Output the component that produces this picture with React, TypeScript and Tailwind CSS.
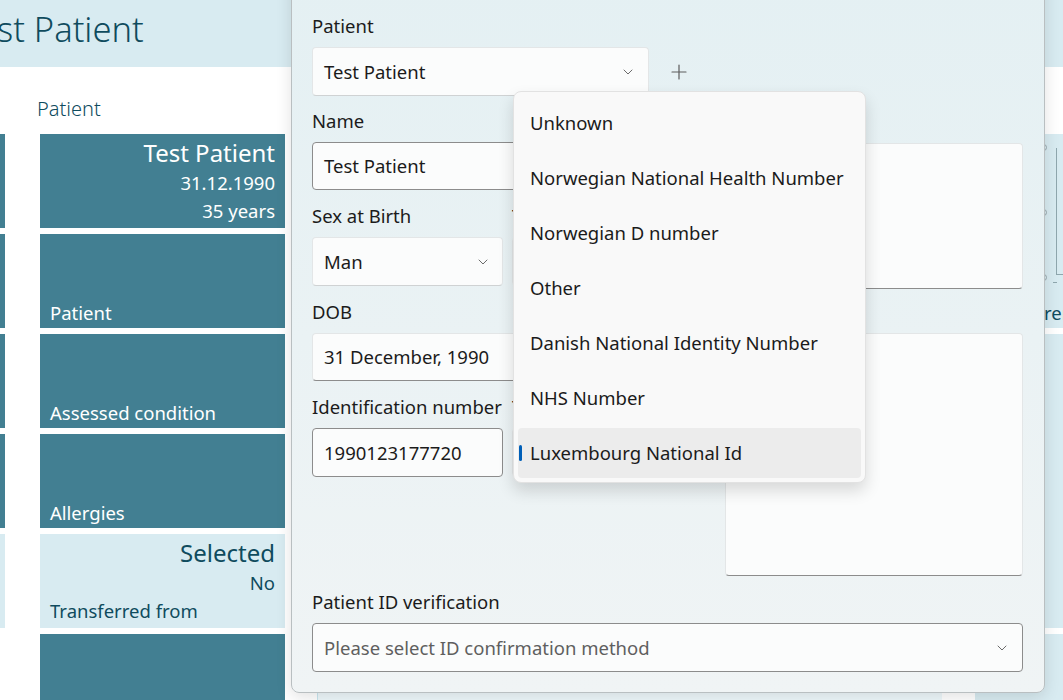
import React from "react";

const Chevron = ({ className = "" }: { className?: string }) => (
  <svg width="10" height="6" viewBox="0 0 10 6" className={className} fill="none">
    <path d="M1 1 L5 5 L9 1" stroke="#6b6b6b" strokeWidth="1" strokeLinecap="round" strokeLinejoin="round" />
  </svg>
);

const Plus = () => (
  <svg width="16" height="16" viewBox="0 0 16 16" fill="none">
    <path d="M8 1 V15 M1 8 H15" stroke="#5c5c5c" strokeWidth="1.2" strokeLinecap="round" />
  </svg>
);

const Label = ({ children }: { children: React.ReactNode }) => (
  <div className="h-[24px] leading-[24px] text-[18.5px] text-[#1b1b1b] mb-[9px] whitespace-nowrap">{children}</div>
);

const items = [
  "Unknown",
  "Norwegian National Health Number",
  "Norwegian D number",
  "Other",
  "Danish National Identity Number",
  "NHS Number",
  "Luxembourg National Id",
];

export default function App() {
  return (
    <div
      className="relative w-[1063px] h-[700px] overflow-hidden bg-white"
      style={{ fontFamily: '"Noto Sans", "Open Sans", sans-serif' }}
    >
      {/* Header */}
      <div className="h-[67px] bg-[#d8ebf1] flex items-center overflow-hidden pb-[8px]">
        <div className="ml-[-38px] text-[34.5px] font-light text-[#0f4b5e] leading-none whitespace-nowrap">Test Patient</div>
      </div>

      {/* Background body */}
      <div className="flex h-[633px] overflow-hidden">
        {/* left strip */}
        <div className="w-[5px] shrink-0 pt-[67px] flex flex-col gap-[6px]">
          <div className="h-[94px] shrink-0 bg-[#427f92]" />
          <div className="h-[94px] shrink-0 bg-[#427f92]" />
          <div className="h-[94px] shrink-0 bg-[#427f92]" />
          <div className="h-[94px] shrink-0 bg-[#427f92]" />
          <div className="h-[94px] shrink-0 bg-[#d8ebf1]" />
        </div>
        {/* tile column */}
        <div className="ml-[35px] w-[245px] shrink-0 flex flex-col">
          <div className="h-[67px] shrink-0 flex items-end pb-[12px]">
            <span className="text-[20px] leading-[27px] font-light text-[#0f4b5e] -ml-[3px]">Patient</span>
          </div>
          <div className="flex flex-col gap-[6px] shrink-0">
            <div className="h-[94px] shrink-0 bg-[#427f92] text-white flex flex-col items-end pr-[10px] pt-[3px]">
              <div className="text-[24px] leading-[32px]">Test Patient</div>
              <div className="text-[18.5px] leading-[28px]">31.12.1990</div>
              <div className="text-[18.5px] leading-[28px]">35 years</div>
            </div>
            <div className="h-[94px] shrink-0 bg-[#427f92] text-white flex items-end px-[10px] pb-[1px]">
              <span className="text-[18.5px] leading-[28px]">Patient</span>
            </div>
            <div className="h-[94px] shrink-0 bg-[#427f92] text-white flex items-end px-[10px] pb-[1px]">
              <span className="text-[18.5px] leading-[28px]">Assessed condition</span>
            </div>
            <div className="h-[94px] shrink-0 bg-[#427f92] text-white flex items-end px-[10px] pb-[1px]">
              <span className="text-[18.5px] leading-[28px]">Allergies</span>
            </div>
            <div className="h-[94px] shrink-0 bg-[#d8ebf1] text-[#0f4b5e] flex flex-col px-[10px] pt-[3px]">
              <div className="text-[24px] leading-[32px] text-right">Selected</div>
              <div className="text-[18.5px] leading-[28px] text-right">No</div>
              <div className="text-[18.5px] leading-[28px]">Transferred from</div>
            </div>
            <div className="h-[94px] shrink-0 bg-[#427f92]" />
          </div>
        </div>
        {/* middle area */}
        <div className="flex-1 flex">
          <div className="ml-[32px] w-[625px] shrink-0 mt-[560px] bg-[#eef8fb] border-l border-[#c9e6ef]" />
          <div className="ml-[33px] flex-1 flex flex-col gap-[6px] pt-[67px]">
            <div className="h-[194px] shrink-0 bg-[#d8ebf1] relative overflow-hidden">
              <div className="absolute left-[65px] top-[10px] w-[7px] h-[7px] rounded-full border border-[#9aa9ad]" />
              <div className="absolute left-[65px] top-[75px] w-[7px] h-[7px] rounded-full border border-[#9aa9ad]" />
              <div className="absolute left-[65px] top-[140px] w-[7px] h-[7px] rounded-full border border-[#9aa9ad]" />
              <div className="absolute left-[81px] top-[14px] h-[126px] w-px bg-[#8fa7ae]" />
              <div className="absolute left-[81px] top-[140px] w-[10px] h-px bg-[#8fa7ae]" />
              <div className="absolute left-[78px] top-[148px] w-[4px] h-px bg-[#8fa7ae]" />
              <div className="absolute left-[69px] top-[165px] text-[18.5px] leading-[28px] text-[#0f4b5e] whitespace-nowrap">rendered</div>
            </div>
            <div className="h-[294px] shrink-0 bg-[#d8ebf1]" />
            <div className="flex-1 bg-[#d8ebf1]" />
          </div>
        </div>
      </div>

      {/* Dialog */}
      <div className="absolute left-[291px] top-[-20px] w-[754px] h-[713px] rounded-b-[8px] border border-[#b9bfc1] bg-gradient-to-b from-[#e4f0f3] to-[#f0f4f5] shadow-[0_4px_16px_rgba(0,0,0,0.12)] pl-[20px] pr-[21px] pt-[33px]">
        <div className="flex gap-[21px]">
          {/* left column */}
          <div className="w-[392px] flex flex-col">
            <Label>Patient</Label>
            <div className="flex items-center">
              <div className="w-[337px] h-[49px] rounded-[4px] bg-[#fbfcfc] border border-[#e3e6e7] border-b-[#cfd2d3] flex items-center pl-[11px] pr-[15px] text-[18.5px] text-[#1b1b1b]">
                <span className="flex-1">Test Patient</span>
                <Chevron />
              </div>
              <div className="ml-[22px]"><Plus /></div>
            </div>
            <div className="mt-[13px]"><Label>Name</Label></div>
            <div className="h-[48px] rounded-[4px] bg-[#fbfcfc] border border-[#8c8c8c] flex items-center pl-[11px] text-[18.5px] text-[#1b1b1b]">Test Patient</div>
            <div className="mt-[14px] flex gap-[9px]">
              <div className="w-[191px]">
                <Label>Sex at Birth</Label>
                <div className="h-[49px] rounded-[4px] bg-[#fbfcfc] border border-[#e3e6e7] border-b-[#cfd2d3] flex items-center pl-[11px] pr-[14px] text-[18.5px] text-[#1b1b1b]">
                  <span className="flex-1">Man</span>
                  <Chevron />
                </div>
              </div>
              <div className="flex-1">
                <Label>Title</Label>
                <div className="h-[49px] rounded-[4px] bg-[#fbfcfc] border border-[#e3e6e7]" />
              </div>
            </div>
            <div className="mt-[14px]"><Label>DOB</Label></div>
            <div className="h-[48px] rounded-[4px] bg-[#fbfcfc] border border-[#e3e6e7] border-b-[#8c8c8c] flex items-center pl-[11px] text-[18.5px] text-[#1b1b1b]">31 December, 1990</div>
            <div className="mt-[14px] flex gap-[9px]">
              <div className="w-[191px]">
                <Label>Identification number</Label>
                <div className="h-[49px] rounded-[4px] bg-[#fbfcfc] border border-[#8c8c8c] flex items-center pl-[11px] text-[18.5px] text-[#1b1b1b]">1990123177720</div>
              </div>
              <div className="flex-1">
                <Label>Type</Label>
                <div className="h-[49px] rounded-[4px] bg-[#fbfcfc] border border-[#e3e6e7]" />
              </div>
            </div>
          </div>
          {/* right column */}
          <div className="flex-1 flex flex-col pt-[96px]">
            <Label>Address</Label>
            <div className="h-[146px] rounded-[4px] bg-[#fbfcfc] border border-[#e3e6e7] border-b-[#8c8c8c]" />
            <div className="mt-[11px]"><Label>Notes</Label></div>
            <div className="h-[243px] rounded-[4px] bg-[#fbfcfc] border border-[#e3e6e7] border-b-[#8c8c8c]" />
          </div>
        </div>
        <div className="mt-[14px]">
          <Label>Patient ID verification</Label>
          <div className="h-[49px] rounded-[4px] bg-[#fbfcfc] border border-[#8c8c8c] flex items-center pl-[11px] pr-[15px] text-[18.5px] text-[#5f5f5f]">
            <span className="flex-1">Please select ID confirmation method</span>
            <Chevron />
          </div>
        </div>
      </div>

      {/* Dropdown popup */}
      <div className="absolute left-[513px] top-[91px] w-[353px] rounded-[8px] bg-[#f9f9f9] border border-[#e2e2e2] shadow-[0_8px_16px_rgba(0,0,0,0.14)] pt-[6px] pb-[4px] px-[4px] flex flex-col gap-[5px]">
        {items.map((it, i) => (
          <div
            key={it}
            className={`relative h-[50px] rounded-[4px] flex items-center pl-[12px] text-[18.5px] text-[#1b1b1b] whitespace-nowrap ${i === items.length - 1 ? "bg-[#ececec]" : ""}`}
          >
            {i === items.length - 1 && (
              <div className="absolute left-[1px] top-[17px] w-[3px] h-[16px] rounded-full bg-[#005fb8]" />
            )}
            {it}
          </div>
        ))}
      </div>
    </div>
  );
}
